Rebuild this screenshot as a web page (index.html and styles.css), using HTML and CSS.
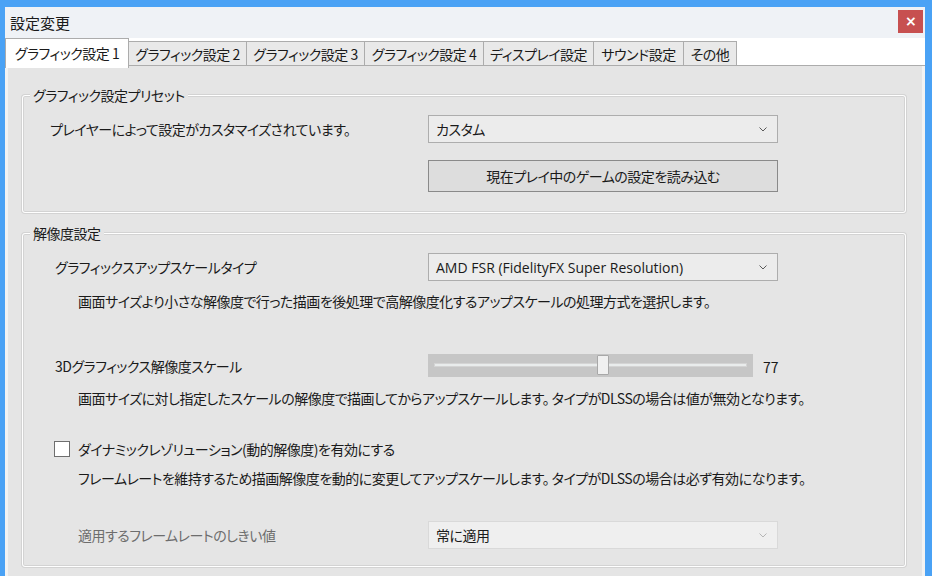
FILE: index.html
```html
<!DOCTYPE html>
<html lang="ja">
<head>
<meta charset="utf-8">
<title>設定変更</title>
<link rel="stylesheet" href="styles.css">
</head>
<body>
<div class="window">
  <div class="titlebar">
    <span class="title">設定変更</span>
    <div class="close">×</div>
  </div>
  <div class="tabs">
    <div class="tab active t1">グラフィック設定 1</div>
    <div class="tab t2">グラフィック設定 2</div>
    <div class="tab t3">グラフィック設定 3</div>
    <div class="tab t4">グラフィック設定 4</div>
    <div class="tab t5">ディスプレイ設定</div>
    <div class="tab t6">サウンド設定</div>
    <div class="tab t7">その他</div>
  </div>
  <div class="panel">
    <div class="group g1">
      <span class="legend">グラフィック設定プリセット</span>
      <div class="row r-preset">
        <span class="label l1">プレイヤーによって設定がカスタマイズされています。</span>
        <div class="select"><span>カスタム</span><svg class="chev" width="8" height="5" viewBox="0 0 8 5"><path d="M0.5 0.5 L4 4 L7.5 0.5" fill="none" stroke="#5a5a5a" stroke-width="1"/></svg></div>
      </div>
      <div class="row r-button">
        <span></span>
        <div class="button">現在プレイ中のゲームの設定を読み込む</div>
      </div>
    </div>
    <div class="group g2">
      <span class="legend">解像度設定</span>
      <div class="row r-a">
        <span class="label l2">グラフィックスアップスケールタイプ</span>
        <div class="select"><span class="latin">AMD FSR (FidelityFX Super Resolution)</span><svg class="chev" width="8" height="5" viewBox="0 0 8 5"><path d="M0.5 0.5 L4 4 L7.5 0.5" fill="none" stroke="#5a5a5a" stroke-width="1"/></svg></div>
      </div>
      <p class="desc d1">画面サイズより小さな解像度で行った描画を後処理で高解像度化するアップスケールの処理方式を選択します。</p>
      <div class="row r-b">
        <span class="label l2">3Dグラフィックス解像度スケール</span>
        <div class="slider-wrap">
          <div class="slider"><div class="track"></div><div class="thumb"></div></div>
          <span class="value">77</span>
        </div>
      </div>
      <p class="desc d2">画面サイズに対し指定したスケールの解像度で描画してからアップスケールします。 タイプがDLSSの場合は値が無効となります。</p>
      <div class="check-row">
        <span class="checkbox"></span>
        <span class="check-label">ダイナミックレゾリューション(動的解像度)を有効にする</span>
      </div>
      <p class="desc d3">フレームレートを維持するため描画解像度を動的に変更してアップスケールします。 タイプがDLSSの場合は必ず有効になります。</p>
      <div class="row r-d">
        <span class="label l3 disabled">適用するフレームレートのしきい値</span>
        <div class="select disabled-select"><span>常に適用</span><svg class="chev" width="8" height="5" viewBox="0 0 8 5"><path d="M0.5 0.5 L4 4 L7.5 0.5" fill="none" stroke="#b5b5b5" stroke-width="1"/></svg></div>
      </div>
    </div>
  </div>
</div>
</body>
</html>
```

FILE: styles.css
```css
html, body {
  margin: 0;
  padding: 0;
}
body {
  background: #4aa2f5;
  width: 932px;
  height: 576px;
  overflow: hidden;
  font-family: "Noto Sans CJK JP", "Noto Sans", sans-serif;
  font-size: 14px;
  letter-spacing: -0.5px;
  font-feature-settings: "palt";
  color: #1a1a1a;
}
.window {
  margin: 7px 0 0 5px;
  width: 920px;
  height: 569px;
  background: #ffffff;
  display: flex;
  flex-direction: column;
}
.titlebar {
  height: 31px;
  background: #eff2f6;
  display: flex;
  align-items: center;
  justify-content: space-between;
  flex-shrink: 0;
}
.title {
  margin-left: 5px;
  font-size: 15px;
  letter-spacing: 0;
  color: #1a1a1a;
}
.close {
  width: 25px;
  height: 23px;
  background: #c75050;
  color: #ffffff;
  font-family: "DejaVu Sans", sans-serif;
  font-size: 14px;
  font-weight: bold;
  display: flex;
  align-items: center;
  justify-content: center;
  margin-right: 2px;
  margin-top: -3px;
}
.tabs {
  height: 27px;
  display: flex;
  align-items: flex-end;
  flex-shrink: 0;
  position: relative;
  z-index: 1;
}
.tab {
  height: 24px;
  box-sizing: border-box;
  border: 1px solid #acacac;
  border-bottom: none;
  background: #e9e9e9;
  margin-left: -1px;
  display: flex;
  align-items: center;
  justify-content: center;
  white-space: nowrap;
}
.tab.active {
  height: 30px;
  margin-left: 0;
  margin-bottom: -3px;
  background: #ffffff;
  padding-bottom: 2px;
  position: relative;
}
.t1 { width: 124px; }
.t2 { width: 119px; }
.t3 { width: 119px; }
.t4 { width: 120px; }
.t5 { width: 111px; }
.t6 { width: 91px; }
.t7 { width: 54px; }
.panel {
  flex: 1;
  border-top: 1px solid #acacac;
  background: #e5e5e5;
  box-shadow: inset 3px 0 0 #f3f3f3, inset -3px 0 0 #f3f3f3;
  padding: 29px 17px 0 17px;
}
.group {
  position: relative;
  border: 1px solid #ffffff;
  box-shadow: 0 0 0 1px #d3d3d3, inset 0 0 0 1px #d3d3d3;
  border-radius: 3px;
  width: 884px;
  box-sizing: border-box;
}
.legend {
  position: absolute;
  top: -11px;
  left: 7px;
  padding: 0 3px;
  background: #e5e5e5;
  line-height: 20px;
}
.g1 {
  height: 118px;
  padding-top: 19px;
}
.g2 {
  margin-top: 20px;
  height: 334px;
  padding-top: 19px;
}
.row {
  display: grid;
  grid-template-columns: 405px 350px;
  align-items: center;
}
.label {
  white-space: nowrap;
}
.l1 { padding-left: 27px; }
.l2 { padding-left: 32px; }
.l3 { padding-left: 55px; }
.disabled { color: #6d6d6d; }
.select {
  height: 28px;
  box-sizing: border-box;
  border: 1px solid #adadad;
  background: #ececec;
  display: flex;
  align-items: center;
  justify-content: space-between;
  padding: 0 10px 0 7px;
}
.latin {
  font-family: "Open Sans", "Noto Sans CJK JP", sans-serif;
  font-size: 14px;
  letter-spacing: 0;
}
.disabled-select {
  border-color: #d9d9d9;
  background: #efefef;
}
.r-button {
  margin-top: 17px;
}
.button {
  height: 32px;
  box-sizing: border-box;
  border: 1px solid #8a8a8a;
  background: #dddddd;
  display: flex;
  align-items: center;
  justify-content: center;
}
.desc {
  margin: 10px 0 0 0;
  padding-left: 55px;
  line-height: 20px;
  white-space: nowrap;
}
.r-b {
  margin-top: 43px;
}
.slider-wrap {
  display: flex;
  align-items: center;
  gap: 10px;
  white-space: nowrap;
}
.slider {
  position: relative;
  width: 325px;
  height: 23px;
  background: #c6c6c6;
  flex-shrink: 0;
}
.track {
  position: absolute;
  left: 6px;
  right: 6px;
  top: 9px;
  height: 4px;
  background: #e9ecec;
  border: 1px solid #d4d4d4;
  box-sizing: border-box;
}
.thumb {
  position: absolute;
  left: 169px;
  top: 1px;
  width: 12px;
  height: 20px;
  box-sizing: border-box;
  background: #f0f0f0;
  border: 1px solid #a8a8a8;
  border-radius: 1px;
}
.value {
  padding-top: 2px;
  letter-spacing: 0;
}
.d2 { margin-top: 11px; }
.check-row {
  margin-top: 32px;
  height: 18px;
  display: flex;
  align-items: center;
  padding-left: 31px;
}
.checkbox {
  width: 16px;
  height: 16px;
  box-sizing: border-box;
  border: 1px solid #6e6e6e;
  background: #ffffff;
  margin-right: 8px;
  flex-shrink: 0;
}
.check-label { white-space: nowrap; }
.d3 { margin-top: 10px; }
.r-d { margin-top: 33px; }
```
